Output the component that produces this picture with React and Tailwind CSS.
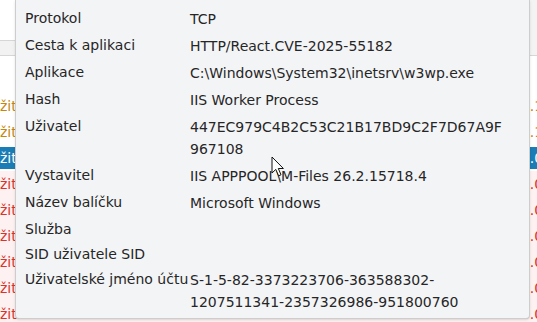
import React from 'react';

const rows = [
    { label: 'Protokol', value: 'TCP' },
    { label: 'Cesta k aplikaci', value: 'HTTP/React.CVE-2025-55182' },
    { label: 'Aplikace', value: 'C:\\Windows\\System32\\inetsrv\\w3wp.exe' },
    { label: 'Hash', value: 'IIS Worker Process' },
    { label: 'Uživatel', value: '447EC979C4B2C53C21B17BD9C2F7D67A9F967108', breakAll: true },
    { label: 'Vystavitel', value: 'IIS APPPOOL\\M-Files 26.2.15718.4' },
    { label: 'Název balíčku', value: 'Microsoft Windows' },
    { label: 'Služba', value: '' },
    { label: 'SID uživatele SID', value: '' },
    { label: 'Uživatelské jméno účtu', value: 'S-1-5-82-3373223706-363588302-1207511341-2357326986-951800760', hyphenBreaks: true },
];

const tableRows = [
    { kind: 'warn' },
    { kind: 'warn' },
    { kind: 'selected' },
    { kind: 'error' },
    { kind: 'error' },
    { kind: 'error' },
    { kind: 'error' },
    { kind: 'error' },
    { kind: 'error' },
];

const rowStyles = {
    warn: 'bg-white text-[#c6870b]',
    selected: 'bg-white text-white',
    error: 'bg-[#fdf1f1] text-[#d9342b]',
};

const Value = ({ row }) => {
    if (row.hyphenBreaks) {
        const parts = row.value.split('-');
        return (
            <>
                {parts.map((part, i) => (
                    <React.Fragment key={i}>
                        {part}
                        {i < parts.length - 1 && <>-<wbr /></>}
                    </React.Fragment>
                ))}
            </>
        );
    }
    return row.value;
};

const Cursor = () => (
    <svg width="14" height="22" viewBox="0 0 14 22" className="absolute left-[271px] top-[156px]">
        <path
            d="M1 1 L1 17 L4.8 13.4 L7.6 19.8 L10 18.8 L7.3 12.5 L12.4 12.5 Z"
            fill="#ffffff"
            stroke="#111111"
            strokeWidth="1"
            strokeLinejoin="miter"
        />
    </svg>
);

const App = () => {
    return (
        <div className="relative w-[537px] h-[322px] overflow-hidden bg-white font-['DejaVu_Sans',sans-serif] text-[14px]">
            {/* table behind the tooltip */}
            <div className="flex flex-col">
                <div className="flex h-[56px]">
                    <div className="w-[40px] flex flex-col">
                        <div className="h-[41px] bg-white border-b border-[#d6d6d6]" />
                        <div className="h-[15px] bg-[#f2f2f2] border-b border-[#d6d6d6]" />
                    </div>
                    <div className="flex-1 bg-[#f3f3f3] border-b border-[#d6d6d6]" />
                </div>
                <div className="h-[37px] bg-white" />
                {tableRows.map((row, index) => (
                    <div key={index} className={`h-[26px] flex items-center ${rowStyles[row.kind]}`}>
                        <div
                            className={`w-full h-[22px] flex items-center justify-between whitespace-nowrap overflow-hidden ${
                                row.kind === 'selected' ? 'bg-[#1b7db6]' : ''
                            }`}
                        >
                            <span className="leading-[22px]">žití</span>
                            <span className="leading-[22px] w-[25px]">{row.kind === 'warn' ? '10.1.4' : '10.0.2'}</span>
                        </div>
                    </div>
                ))}
            </div>

            {/* tooltip */}
            <div className="absolute left-[15px] top-0 w-[515px] bg-[#f3f4f6] border-x border-b border-[#cdcdcd] rounded-b-[4px] pl-[9px] pt-[8px] pb-[5px] text-[#262626] shadow-sm">
                <div className="grid grid-cols-[165px_316px] gap-y-[5px]">
                    {rows.map((row) => (
                        <React.Fragment key={row.label}>
                            <div className="leading-[20px] whitespace-nowrap">{row.label}</div>
                            <div className={`leading-[22px] ${row.breakAll ? 'break-all' : ''}`}>
                                <Value row={row} />
                            </div>
                        </React.Fragment>
                    ))}
                </div>
            </div>

            <Cursor />
        </div>
    );
};

export default App;
